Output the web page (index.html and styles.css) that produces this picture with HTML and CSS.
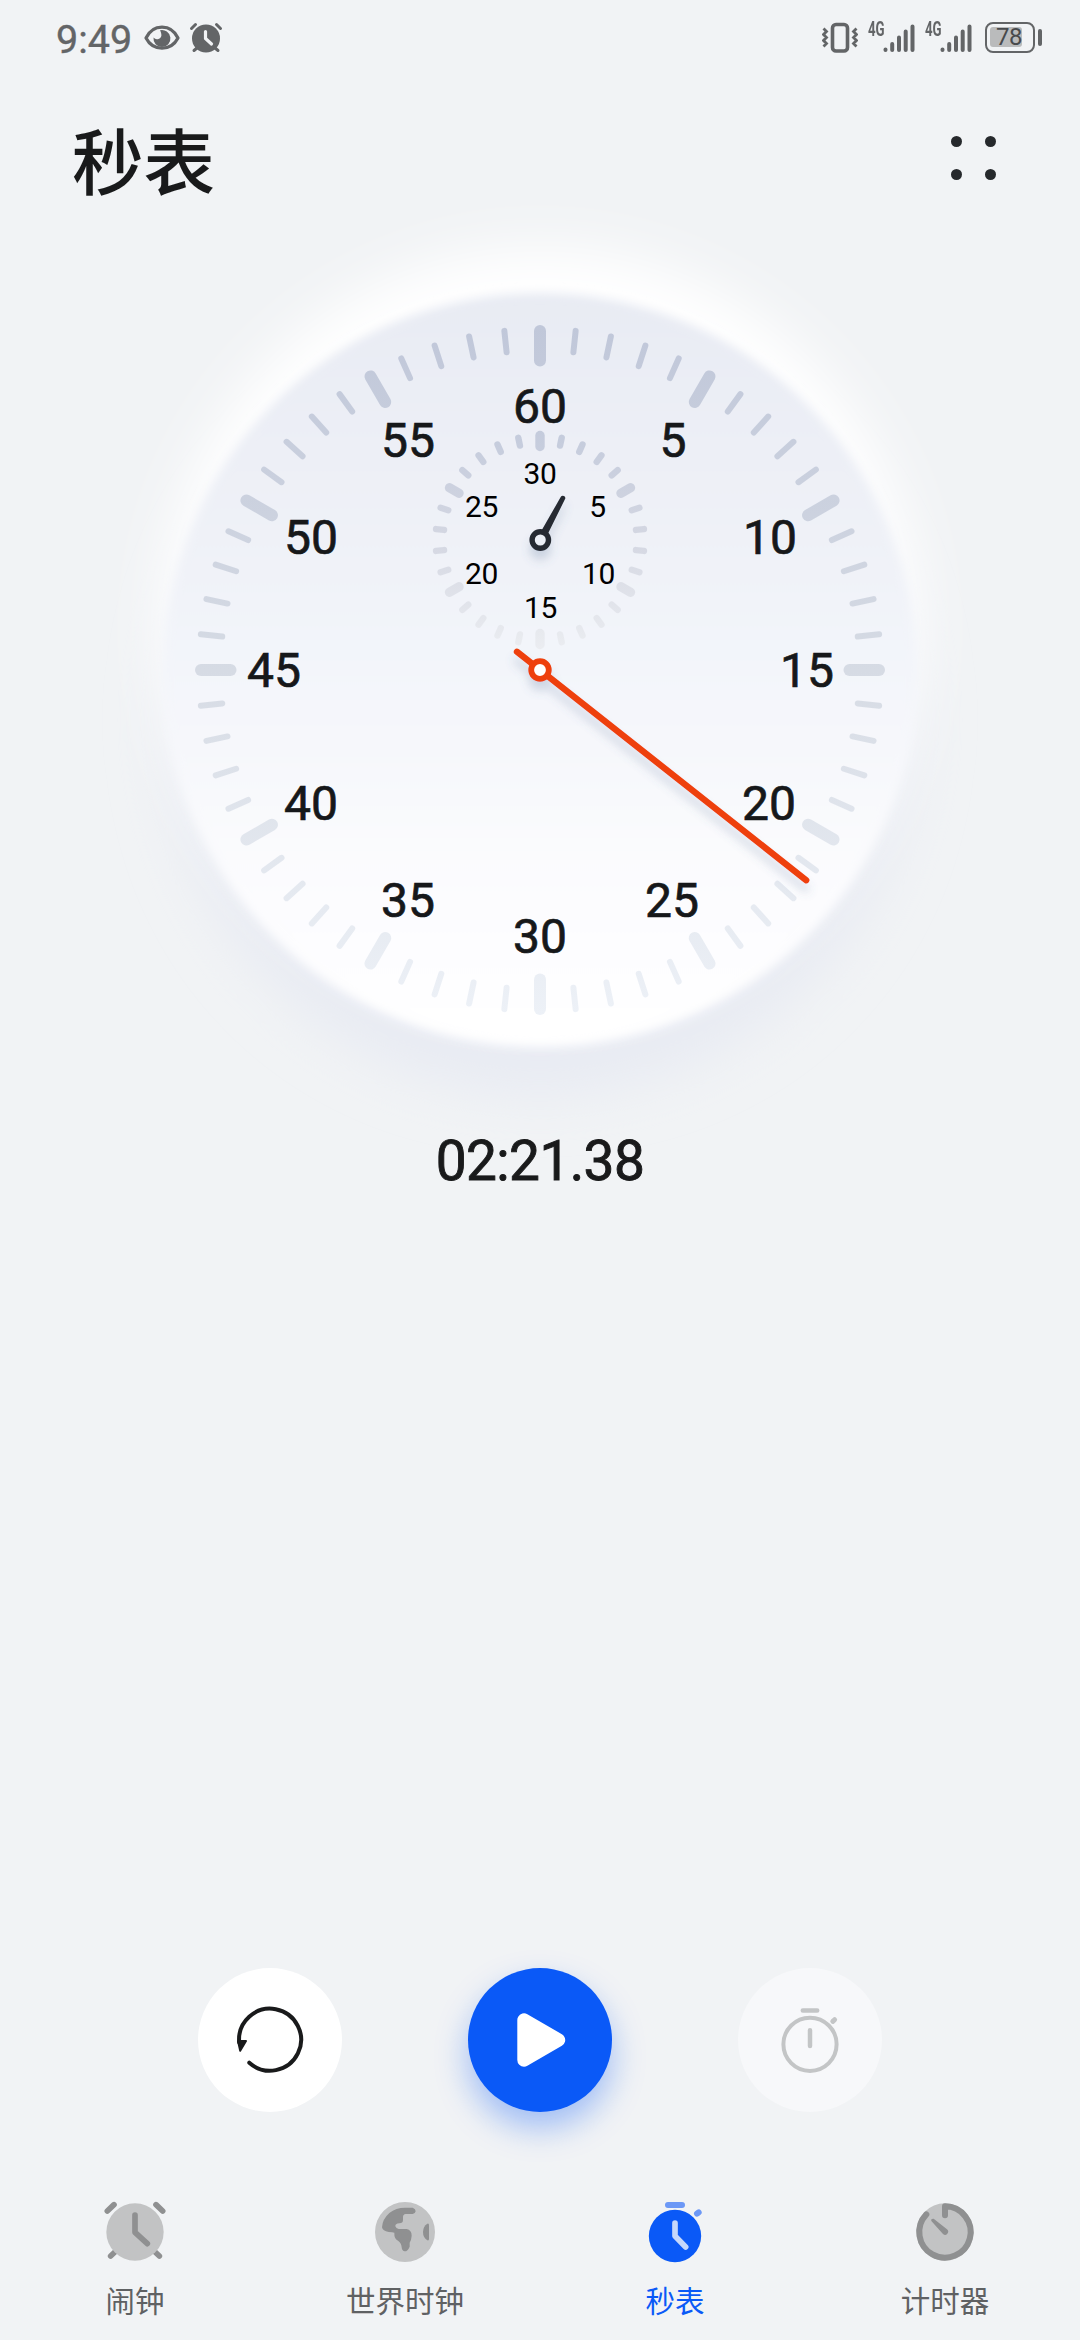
FILE: index.html
```html
<!DOCTYPE html>
<html lang="zh-CN">
<head>
<meta charset="utf-8">
<title>秒表</title>
<link rel="stylesheet" href="styles.css">
</head>
<body>
<div class="screen">
  <div class="status">
    <div class="status-left">
      <span class="clock">9:49</span>
      <svg class="eye" width="36" height="26" viewBox="0 0 36 26">
        <path d="M2 13C9 -1.500 27 -1.500 34 13C27 26.500 9 26.500 2 13Z" fill="none" stroke="#636567" stroke-width="3.200" stroke-linejoin="round"/>
        <path d="M16 5.200A8.500 8.500 0 1 1 9.500 12.500Q11.500 15 14.500 14Q18 12.500 17.300 9Q17 7 16 5.200Z" fill="#636567"/>
      </svg>
      <svg class="alarm" width="34" height="32" viewBox="0 0 34 32">
        <circle cx="17" cy="16.500" r="14" fill="#636567"/>
        <path d="M2.500 6.500L6.500 2.500M31.500 6.500L27.500 2.500M5 28.500L8 26M29 28.500L26 26" stroke="#636567" stroke-width="3" stroke-linecap="round"/>
        <path d="M16.500 9.500V16.500L22.500 22" fill="none" stroke="#f1f3f5" stroke-width="3.200" stroke-linecap="round" stroke-linejoin="round"/>
      </svg>
    </div>
    <div class="status-right">
      <svg width="36" height="32" viewBox="0 0 36 32">
        <rect x="10.500" y="2.500" width="15" height="26.500" rx="3.500" fill="none" stroke="#636567" stroke-width="3.600"/>
        <path d="M1.500 6.500l3 3-3 3 3 3-3 3 3 3-3 3M34.500 6.500l-3 3 3 3-3 3 3 3-3 3 3 3" fill="none" stroke="#636567" stroke-width="2.800"/>
      </svg>
      <div class="signal"><span class="net">4G</span>
        <svg width="32" height="32" viewBox="0 0 32 32"><path d="M2.500 27.500V28M9.200 22V28M16 15.500V28M22.700 9.500V28M29.500 4.500V28" stroke="#636567" stroke-width="4" stroke-linecap="round"/></svg>
      </div>
      <div class="signal"><span class="net">4G</span>
        <svg width="32" height="32" viewBox="0 0 32 32"><path d="M2.500 27.500V28M9.200 22V28M16 15.500V28M22.700 9.500V28M29.500 4.500V28" stroke="#636567" stroke-width="4" stroke-linecap="round"/></svg>
      </div>
      <div class="battery"><div class="cell"><span class="level">78</span></div><i class="nub"></i></div>
    </div>
  </div>

  <header class="header">
    <h1>秒表</h1>
    <div class="more"><i></i><i></i><i></i><i></i></div>
  </header>

  <svg class="dial" width="1080" height="930" viewBox="0 200 1080 930">
    <defs>
      <linearGradient id="face" gradientUnits="userSpaceOnUse" x1="0" y1="293" x2="0" y2="1047">
        <stop offset="0" stop-color="#e8ebf3"/><stop offset=".5" stop-color="#f3f5fa"/><stop offset=".8" stop-color="#fcfcfe"/><stop offset="1" stop-color="#fff"/>
      </linearGradient>
      <linearGradient id="tick" gradientUnits="userSpaceOnUse" x1="0" y1="325" x2="0" y2="1015">
        <stop offset="0" stop-color="#c0c7d9"/><stop offset=".5" stop-color="#d6dbe4"/><stop offset="1" stop-color="#edf1f7"/>
      </linearGradient>
      <linearGradient id="subtick" gradientUnits="userSpaceOnUse" x1="0" y1="430" x2="0" y2="650">
        <stop offset="0" stop-color="#c4cbdc"/><stop offset=".5" stop-color="#d4d7e2"/><stop offset="1" stop-color="#ebedf1"/>
      </linearGradient>
      <filter id="soft" x="-10%" y="-10%" width="120%" height="120%"><feGaussianBlur stdDeviation="5"/></filter>
      <filter id="glow" x="-20%" y="-20%" width="140%" height="140%"><feGaussianBlur stdDeviation="26"/></filter>
      <filter id="drop" x="-30%" y="-30%" width="160%" height="170%"><feDropShadow dx="0" dy="9" stdDeviation="5" flood-color="#5a6f98" flood-opacity=".24"/></filter>
      <g id="five" stroke="#fff" stroke-linecap="round">
        <path d="M540 331V360.500" stroke-width="12"/>
        <g stroke-width="6">
          <path id="m" d="M540 329V350.500" transform="rotate(6 540 670)"/>
          <use href="#m" transform="rotate(6 540 670)"/><use href="#m" transform="rotate(12 540 670)"/><use href="#m" transform="rotate(18 540 670)"/>
        </g>
      </g>
      <g id="quarter"><use href="#five"/><use href="#five" transform="rotate(30 540 670)"/><use href="#five" transform="rotate(60 540 670)"/></g>
      <g id="subfive" stroke="#fff" stroke-linecap="round">
        <path d="M540 435.500V446.500" stroke-width="9.400"/>
        <g stroke-width="6.400">
          <path id="n" d="M540 435.500V443.500" transform="rotate(12 540 540)"/>
          <use href="#n" transform="rotate(12 540 540)"/><use href="#n" transform="rotate(24 540 540)"/><use href="#n" transform="rotate(36 540 540)"/>
        </g>
      </g>
      <mask id="ticks" maskUnits="userSpaceOnUse" x="180" y="310" width="720" height="720">
        <use href="#quarter"/><use href="#quarter" transform="rotate(90 540 670)"/><use href="#quarter" transform="rotate(180 540 670)"/><use href="#quarter" transform="rotate(270 540 670)"/>
      </mask>
      <mask id="subticks" maskUnits="userSpaceOnUse" x="420" y="420" width="240" height="240">
        <use href="#subfive"/><use href="#subfive" transform="rotate(60 540 540)"/><use href="#subfive" transform="rotate(120 540 540)"/><use href="#subfive" transform="rotate(180 540 540)"/><use href="#subfive" transform="rotate(240 540 540)"/><use href="#subfive" transform="rotate(300 540 540)"/>
      </mask>
    </defs>
    <circle cx="540" cy="720" r="376" fill="#e8ebf3" filter="url(#glow)"/>
    <circle cx="540" cy="628" r="380" fill="#fff" filter="url(#glow)"/>
    <circle cx="540" cy="670" r="377" fill="url(#face)" filter="url(#soft)"/>
    <rect x="180" y="310" width="720" height="720" fill="url(#tick)" mask="url(#ticks)"/>
    <rect x="420" y="420" width="240" height="240" fill="url(#subtick)" mask="url(#subticks)"/>
    <g class="num">
      <text x="540" y="422.500">60</text><text x="673" y="456.500">5</text><text x="770" y="554">10</text><text x="807" y="687">15</text><text x="769" y="819.500">20</text><text x="672" y="916.500">25</text><text x="540" y="952.500">30</text><text x="408" y="916.500">35</text><text x="311" y="819.500">40</text><text x="274" y="687">45</text><text x="311" y="554">50</text><text x="408" y="457">55</text>
    </g>
    <g class="subnum">
      <text x="540" y="483.500">30</text><text x="597.500" y="516.700">5</text><text x="598.500" y="583.500">10</text><text x="540.500" y="617.500">15</text><text x="481.500" y="583.500">20</text><text x="481.500" y="516.700">25</text>
    </g>
    <g filter="url(#drop)">
      <path d="M536.700 540L537.900 492.500A2.400 2.400 0 0 1 542.700 492.500L544.300 540Z" fill="#262b33" transform="rotate(28.300 540.300 540)"/>
      <circle cx="540.300" cy="540" r="8.200" fill="#eceff6" stroke="#262b33" stroke-width="5.400"/>
    </g>
    <g filter="url(#drop)">
      <path d="M517 651.800L806.200 880.200" stroke="#ee400d" stroke-width="6.400" stroke-linecap="round"/>
      <circle cx="540" cy="670" r="8.800" fill="#fff" stroke="#ee400d" stroke-width="5.800"/>
    </g>
  </svg>

  <div class="elapsed">02:21.38</div>

  <div class="controls">
    <button class="btn reset" aria-label="复位">
      <svg width="72" height="72" viewBox="0 0 72 72"><path d="M15.300 58.700A31 31 0 1 0 5.200 38.500" fill="none" stroke="#191a1b" stroke-width="4" stroke-linecap="round"/><path d="M4 37H12L6.200 46.800Z" fill="#191a1b" stroke="#191a1b" stroke-width="2" stroke-linejoin="round"/></svg>
    </button>
    <button class="btn play" aria-label="开始">
      <svg width="72" height="72" viewBox="0 0 72 72"><path d="M20 16V56L54.500 36Z" fill="#fff" stroke="#fff" stroke-width="13.400" stroke-linejoin="round"/></svg>
    </button>
    <button class="btn lap" aria-label="计次">
      <svg width="72" height="72" viewBox="0 0 72 72" fill="none" stroke="#c3c5c6" stroke-linecap="round"><circle cx="36" cy="40.300" r="26.600" stroke-width="4"/><path d="M28.800 6.600H43.200M36 26.300V42" stroke-width="4.500"/><path d="M58.800 17.400L60.600 15.700" stroke-width="5"/></svg>
    </button>
  </div>

  <nav class="tabs">
    <div class="tab">
      <svg width="72" height="72" viewBox="117 78 216 216" stroke-linecap="round"><path d="M142 123L162 104M308 123L288 104M152 258L168 243M298 258L282 243" stroke="#8f9091" stroke-width="17"/><circle cx="225" cy="186" r="86" fill="#c2c3c4"/><path d="M225 135V187L262 221" fill="none" stroke="#8f9091" stroke-width="17" stroke-linejoin="round"/></svg>
      <span>闹钟</span>
    </div>
    <div class="tab">
      <svg width="72" height="72" viewBox="927 78 216 216"><circle cx="1035" cy="186" r="90" fill="#c2c3c4"/><path d="M966 172Q967 148 988 129Q1008 113 1035 113H1058Q1067 117 1067 124Q1066 131 1058 132H1037Q1029 133 1029 141V150Q1029 160 1018 160Q1005 161 1006 169Q1008 176 1016 177H1040Q1055 180 1055 197Q1054 211 1049 218V230Q1043 244 1034 244Q1026 243 1025 232Q1024 218 1014 212Q1002 206 1003 188Q998 186 986 186Q968 183 966 172Z" fill="#8f9091"/><path d="M1102 161Q1107 159 1107 166V206Q1107 213 1102 211Q1089 203 1089 186Q1089 169 1102 161Z" fill="#8f9091"/></svg>
      <span>世界时钟</span>
    </div>
    <div class="tab active">
      <svg width="72" height="72" viewBox="117 78 216 216" stroke-linecap="round"><circle cx="225" cy="198" r="78.500" fill="#0a59f7"/><path d="M204 105H246M291 131L296 127" stroke="#6c98f6" stroke-width="18"/><path d="M225 159V198L257 231" fill="none" stroke="#c6d8fb" stroke-width="17" stroke-linejoin="round"/></svg>
      <span>秒表</span>
    </div>
    <div class="tab">
      <svg width="72" height="72" viewBox="927 78 216 216" stroke-linecap="round"><circle cx="1035" cy="186" r="86" fill="#c2c3c4"/><path d="M1035 136V109A77 77 0 1 1 979 133" fill="none" stroke="#8f9091" stroke-width="18" stroke-linejoin="round"/><path d="M994 153Q992 145 1001 146L1041 178A9 9 0 0 1 1029 192Z" fill="#8f9091"/></svg>
      <span>计时器</span>
    </div>
  </nav>
</div>
</body>
</html>
```
FILE: styles.css
```css
* { box-sizing: border-box; }
body { margin: 0; background: #f1f3f5; }
.screen {
  width: 1080px;
  height: 2340px;
  display: flex;
  flex-direction: column;
  overflow: hidden;
  background: #f1f3f5;
  color: #191a1b;
  font-family: Roboto, "Noto Sans CJK SC", sans-serif;
}
svg { display: block; flex: none; }

.status {
  height: 76px;
  flex: none;
  display: flex;
  justify-content: space-between;
  padding: 0 38px 0 56px;
  color: #636567;
}
.status-left, .status-right { display: flex; align-items: flex-start; }
.clock {
  font-size: 39.500px;
  line-height: 46px;
  margin-top: 17px;
  width: 88px;
  -webkit-text-stroke: .4px currentColor;
}
.eye { margin-top: 25px; }
.alarm { margin: 22px 0 0 9px; }
.status-right { padding-top: 22px; }
.signal { display: flex; margin-left: 9.500px; }
.signal + .signal { margin-left: 10.500px; }
.net {
  width: 15px;
  font-size: 19.500px;
  line-height: 15px;
  font-weight: 700;
  transform: scaleX(.68);
  transform-origin: 0 0;
}
.battery { display: flex; align-items: center; margin-left: 13px; height: 31px; gap: 3px; }
.cell {
  width: 50px;
  height: 31px;
  border: 2.500px solid #636567;
  border-radius: 8px;
  padding: 3px;
}
.level {
  display: block;
  width: 32px;
  height: 20px;
  border-radius: 3px;
  background: #babbbc;
  color: #484a4c;
  font-size: 24px;
  line-height: 21px;
  text-align: right;
  letter-spacing: -.5px;
}
.nub { width: 4px; height: 17px; border-radius: 2px; background: #636567; }

.header {
  height: 124px;
  flex: none;
  display: flex;
  justify-content: space-between;
  align-items: center;
  padding: 40px 84px 0 72px;
}
h1 { margin: 0; font-size: 71.500px; line-height: 76px; font-weight: 500; font-family: "Noto Sans CJK SC", sans-serif; }
.more { display: grid; grid-template-columns: 11px 11px; gap: 22px 23.500px; }
.more i { width: 11px; height: 11px; border-radius: 50%; background: #26292c; }

.dial { overflow: visible; }
.num { font-size: 48px; fill: #16181a; stroke: #16181a; stroke-width: .7px; text-anchor: middle; }
.subnum { font-size: 30px; fill: #000; text-anchor: middle; letter-spacing: -.3px; }

.elapsed {
  font-size: 55px;
  line-height: 63px;
  text-align: center;
  letter-spacing: -.6px;
  -webkit-text-stroke: .9px currentColor;
}

.controls { margin-top: auto; display: flex; justify-content: space-between; padding: 0 198px; }
.btn {
  width: 144px;
  height: 144px;
  padding: 0;
  border: 0;
  border-radius: 50%;
  display: flex;
  align-items: center;
  justify-content: center;
  background: #fff;
}
.play { background: #0a59f7; box-shadow: 0 16px 32px rgba(10, 89, 247, .35); }
.lap { background: #f7f8fa; }

.tabs { height: 228px; flex: none; display: flex; padding-top: 84px; }
.tab {
  flex: 1;
  display: flex;
  flex-direction: column;
  align-items: center;
  gap: 11px;
  color: #5f6163;
  font: 400 29.500px/40px "Noto Sans CJK SC", sans-serif;
}
.active { color: #0a59f7; }
```
